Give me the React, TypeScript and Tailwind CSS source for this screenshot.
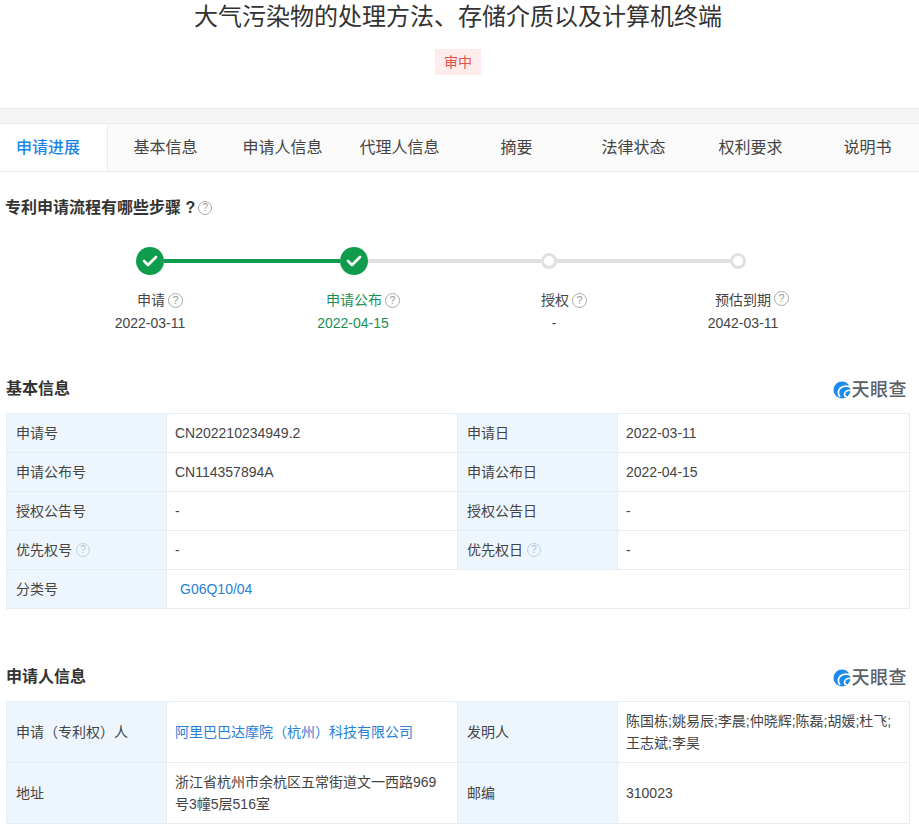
const font = "font-['Liberation_Sans','Noto_Sans_CJK_SC',sans-serif]";

const tabs = ['基本信息', '申请人信息', '代理人信息', '摘要', '法律状态', '权利要求', '说明书'];

const steps = [
  { label: '申请', date: '2022-03-11', width: 'w-[202px]', green: false, up: false, shift: 'pr-[2px]' },
  { label: '申请公布', date: '2022-04-15', width: 'w-[204px]', green: true, up: false, shift: 'pr-[2px]' },
  { label: '授权', date: '-', width: 'w-[198px]', green: false, up: false, shift: 'pr-[2px]' },
  { label: '预估到期', date: '2042-03-11', width: 'w-[178px]', green: false, up: true, shift: '' },
];

function Help({ light, big }: { light?: boolean; big?: boolean }) {
  return (
    <span
      className={`inline-flex shrink-0 items-center justify-center rounded-full border leading-none ${
        big ? 'h-[15px] w-[15px] text-[11px]' : 'h-[14px] w-[14px] text-[10px]'
      } ${light ? 'border-[#b5d3ea] text-[#a3c6e0]' : 'border-[#aaaaaa] text-[#999999]'}`}
    >
      ?
    </span>
  );
}

function Done() {
  return (
    <div className="flex h-[28px] w-[28px] shrink-0 items-center justify-center rounded-full bg-[#0f9d4d]">
      <svg width="16" height="12" viewBox="0 0 16 12" fill="none">
        <path d="M2 6l4 4 8-8" stroke="#ffffff" strokeWidth="2.6" strokeLinecap="round" strokeLinejoin="round" />
      </svg>
    </div>
  );
}

function Dot() {
  return <div className="h-[16px] w-[16px] shrink-0 rounded-full border-[3px] border-[#e0e0e0] bg-white" />;
}

function Logo() {
  return (
    <div className="mt-[2px] flex items-center">
      <svg width="18" height="18" viewBox="0 0 18 18" fill="none">
        <circle cx="9" cy="9" r="8.5" fill="#1a8be8" />
        <path d="M18 6.500C13 3.500 6.500 5.500 5.500 10.500c-.3 2 .4 4 1.500 5.500" stroke="#ffffff" strokeWidth="1.700" />
        <path d="M18 9.500c-3-.8-6 .8-6.500 3.500-.3 1.500.6 2.600 2.500 3" stroke="#ffffff" strokeWidth="1.500" />
      </svg>
      <span className="ml-px text-[18px] leading-none font-medium tracking-[0.5px] text-[#5a5f66]">天眼查</span>
    </div>
  );
}

function Label({ children, h }: { children: React.ReactNode; h: string }) {
  return (
    <td className={`${h} border border-[#e6eef3] bg-[#eef6fd] pl-[9px] align-middle text-[#444444]`}>{children}</td>
  );
}

function Value({ children, h, colSpan }: { children: React.ReactNode; h: string; colSpan?: number }) {
  return (
    <td colSpan={colSpan} className={`${h} border border-[#e6eef3] pr-2 pl-[8px] align-middle leading-[22px] text-[#444444]`}>
      {children}
    </td>
  );
}

function Cols() {
  return (
    <colgroup>
      <col className="w-[160px]" />
      <col className="w-[291px]" />
      <col className="w-[160px]" />
      <col className="w-[292px]" />
    </colgroup>
  );
}

export default function App() {
  return (
    <div className={`${font} h-[828px] w-[919px] overflow-hidden bg-white text-[14px]`}>
      <div className="flex h-[108px] flex-col items-center pr-[3px]">
        <h1 className="h-[49px] pt-[2px] text-[24px] leading-[30px] font-normal text-[#333333]">
          大气污染物的处理方法、存储介质以及计算机终端
        </h1>
        <span className="flex h-[26px] w-[46px] items-center justify-center bg-[#fdeceb] text-[14px] text-[#e4514d]">审中</span>
      </div>
      <div className="h-[16px] border-y border-[#ececec] bg-[#f5f5f5]" />

      <div className="-ml-[10px] flex h-[48px] w-[936px] border-b border-[#ececec] bg-[#fafafa] text-[16px] text-[#444444]">
        <div className="-mr-px flex w-[118px] items-center justify-center border-r border-[#ececec] bg-white pr-px font-medium text-[#1a85e6]">
          申请进展
        </div>
        {tabs.map((t) => (
          <div key={t} className="flex w-[117px] items-center justify-center">
            {t}
          </div>
        ))}
      </div>

      <div className="mt-[25px] flex items-center pl-[5px]">
        <span className="text-[16px] leading-[22px] font-bold text-[#333333]">专利申请流程有哪些步骤 ?</span>
        <span className="-mt-px ml-[3px] flex"><Help /></span>
      </div>

      <div className="mt-[28px] flex items-center pl-[136px]">
        <Done />
        <div className="h-[4px] w-[176px] bg-[#0f9d4d]" />
        <Done />
        <div className="h-[4px] w-[173px] bg-[#e0e0e0]" />
        <Dot />
        <div className="h-[4px] w-[173px] bg-[#e0e0e0]" />
        <Dot />
      </div>

      <div className="mt-[14px] flex pl-[50px]">
        {steps.map((s) => (
          <div key={s.label} className={`${s.width} flex flex-col items-center ${s.green ? 'text-[#1b8f53]' : 'text-[#444444]'}`}>
            <div className="mb-px flex h-[22px] items-center">
              <span className="mr-[3px]">{s.label}</span>
              <span className={`-mr-[18px] flex ${s.up ? '-mt-[3px]' : ''}`}><Help big /></span>
            </div>
            <div className={`leading-[22px] ${s.shift}`}>{s.date}</div>
          </div>
        ))}
      </div>

      <div className="mt-[43px] flex h-[24px] items-center justify-between pr-[12px] pl-[6px]">
        <span className="text-[16px] font-bold text-[#333333]">基本信息</span>
        <Logo />
      </div>

      <table className="mt-[12px] ml-[6px] w-[903px] table-fixed border-collapse">
        <Cols />
        <tbody>
          <tr>
            <Label h="h-[39px]">申请号</Label>
            <Value h="h-[39px]">CN202210234949.2</Value>
            <Label h="h-[39px]">申请日</Label>
            <Value h="h-[39px]">2022-03-11</Value>
          </tr>
          <tr>
            <Label h="h-[39px]">申请公布号</Label>
            <Value h="h-[39px]">CN114357894A</Value>
            <Label h="h-[39px]">申请公布日</Label>
            <Value h="h-[39px]">2022-04-15</Value>
          </tr>
          <tr>
            <Label h="h-[39px]">授权公告号</Label>
            <Value h="h-[39px]">-</Value>
            <Label h="h-[39px]">授权公告日</Label>
            <Value h="h-[39px]">-</Value>
          </tr>
          <tr>
            <Label h="h-[39px]">
              <span className="flex items-center gap-[4px]">优先权号 <Help light /></span>
            </Label>
            <Value h="h-[39px]">-</Value>
            <Label h="h-[39px]">
              <span className="flex items-center gap-[4px]">优先权日 <Help light /></span>
            </Label>
            <Value h="h-[39px]">-</Value>
          </tr>
          <tr>
            <Label h="h-[39px]">分类号</Label>
            <Value h="h-[39px]" colSpan={3}>
              <span className="ml-[5px] text-[#2a7fd6]">G06Q10/04</span>
            </Value>
          </tr>
        </tbody>
      </table>

      <div className="mt-[56px] flex h-[24px] items-center justify-between pr-[12px] pl-[6px]">
        <span className="text-[16px] font-bold text-[#333333]">申请人信息</span>
        <Logo />
      </div>

      <table className="mt-[12px] ml-[6px] w-[903px] table-fixed border-collapse">
        <Cols />
        <tbody>
          <tr>
            <Label h="h-[61px]">申请（专利权）人</Label>
            <Value h="h-[61px]">
              <span className="text-[#2a7fd6]">阿里巴巴达摩院（杭州）科技有限公司</span>
            </Value>
            <Label h="h-[61px]">发明人</Label>
            <Value h="h-[61px]">陈国栋;姚易辰;李晨;仲晓辉;陈磊;胡媛;杜飞;王志斌;李昊</Value>
          </tr>
          <tr>
            <Label h="h-[61px]">地址</Label>
            <Value h="h-[61px]">浙江省杭州市余杭区五常街道文一西路969号3幢5层516室</Value>
            <Label h="h-[61px]">邮编</Label>
            <Value h="h-[61px]">310023</Value>
          </tr>
        </tbody>
      </table>
    </div>
  );
}
